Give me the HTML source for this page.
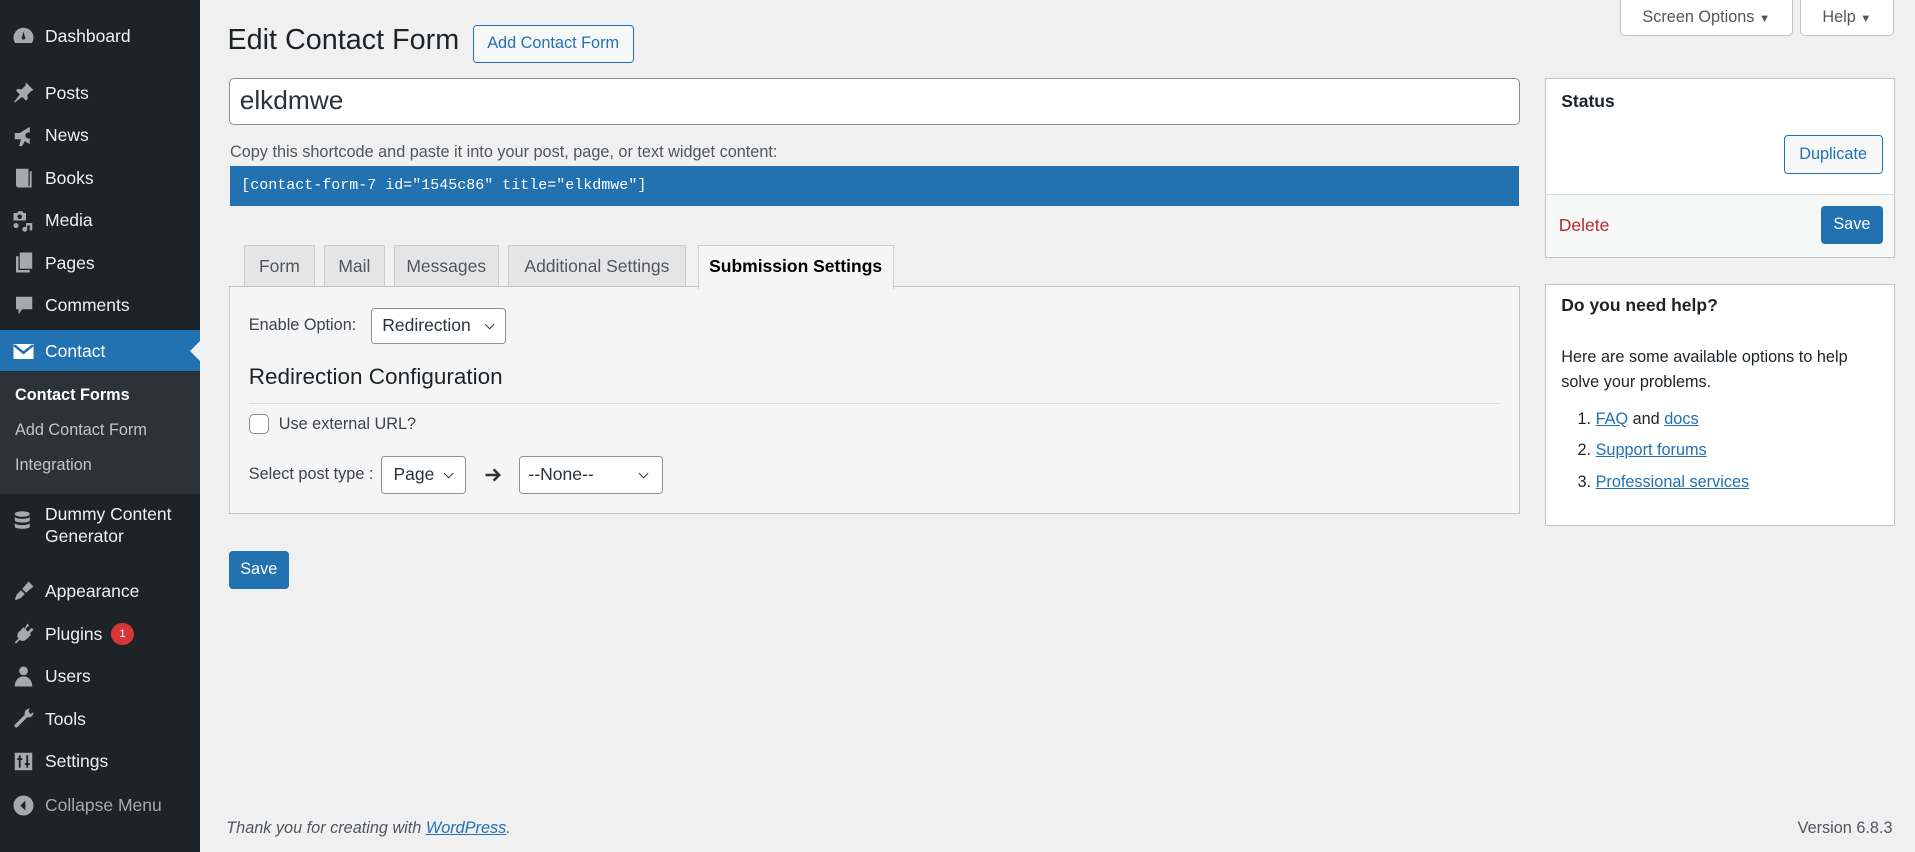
<!DOCTYPE html>
<html><head><meta charset="utf-8"><style>
html,body{margin:0;padding:0;width:1915px;height:852px;overflow:hidden;background:#f0f0f1}
#w{zoom:1.25;width:1532px;height:682px;position:relative;font-family:"Liberation Sans",sans-serif;font-size:13px;color:#3c434a;background:#f0f0f1}
.a{position:absolute}
#side{left:0;top:0;width:160px;height:682px;background:#1d2327}
.mi{position:absolute;left:0;width:160px;height:34px;color:#f0f0f1;font-size:14px}
.mi span{position:absolute;left:36px;top:9px}
.mi svg{position:absolute;left:9px;top:7px}
.sub{position:absolute;left:12px;color:#c3c4c7;font-size:13px}
.btn{position:absolute;border:1px solid #2271b1;border-radius:3px;color:#2271b1;background:#f6f7f7;text-align:center;box-sizing:border-box}
.pbtn{position:absolute;background:#2271b1;color:#fff;border-radius:3px;text-align:center;box-sizing:border-box}
.tab{position:absolute;top:196px;height:34px;background:#e5e5e5;border:1px solid #ccc;border-bottom:none;box-sizing:border-box;font-size:14px;color:#50575e;text-align:center;line-height:33px}
.sel{position:absolute;background:#fff;border:1px solid #8c8f94;border-radius:3px;box-sizing:border-box;font-size:14px;color:#2c3338}
.chev{position:absolute;width:5px;height:5px;border-right:1.3px solid #2c3338;border-bottom:1.3px solid #2c3338;transform:rotate(45deg)}
a{color:#2271b1;text-decoration:underline}
.box{position:absolute;background:#fff;border:1px solid #c3c4c7;box-sizing:border-box}
</style></head><body><div id="w">
<div id="side" class="a">
 <div class="mi" style="top:12px"><svg width="20" height="20" viewBox="0 0 20 20"><path d="M10 3a8 8 0 0 0-8 8c0 1.6.5 3 1.3 4.2h13.4A8 8 0 0 0 18 11a8 8 0 0 0-8-8zm0 9.5a1.5 1.5 0 0 1-1-2.6L10 6l1 3.9a1.5 1.5 0 0 1-1 2.6z" fill="#a7aaad"/></svg><span>Dashboard</span></div>
 <div class="mi" style="top:57px"><svg width="20" height="20" viewBox="0 0 20 20"><path d="M12 2l6 6-2 1-3 3 .5 3-1.5 1.5-3-3L3 18l-.5-.5 4.5-6-3-3L5.5 7l3 .5 3-3z" fill="#a7aaad"/></svg><span>Posts</span></div>
 <div class="mi" style="top:91px"><svg width="20" height="20" viewBox="0 0 20 20"><path d="M3 8h4l8-5v14l-4-2.5-2 4H6.5L8 13H3z" fill="#a7aaad"/><circle cx="14" cy="10" r="2.5" fill="#1d2327"/></svg><span>News</span></div>
 <div class="mi" style="top:125px"><svg width="20" height="20" viewBox="0 0 20 20"><path d="M4 3h10v14H4zM15 5h1.5v13H5v-1h10z" fill="#a7aaad"/></svg><span>Books</span></div>
 <div class="mi" style="top:159px"><svg width="20" height="20" viewBox="0 0 20 20"><path d="M2 4h3l1-1.5h3L10 4h2v6H2z" fill="#a7aaad"/><circle cx="7" cy="7" r="1.8" fill="#1d2327"/><path d="M12 12h5v6h-2v-4h-2v3a2 2 0 1 1-1-1.7zM6 14a2 2 0 1 0 0 .1z" fill="#a7aaad"/></svg><span>Media</span></div>
 <div class="mi" style="top:193px"><svg width="20" height="20" viewBox="0 0 20 20"><path d="M7 2h10v13H7zM4 5h2v11h9v2H4z" fill="#a7aaad"/></svg><span>Pages</span></div>
 <div class="mi" style="top:227px"><svg width="20" height="20" viewBox="0 0 20 20"><path d="M4 3h13v10H9l-3 4v-4H4z" fill="#a7aaad"/></svg><span>Comments</span></div>
 <div class="mi" style="top:264px;height:33px;background:#2271b1;color:#fff"><svg width="20" height="20" viewBox="0 0 20 20"><rect x="2" y="4" width="16" height="12" fill="#fff"/><path d="M2.5 5l7.5 6 7.5-6" stroke="#2271b1" stroke-width="2" fill="none"/></svg><span>Contact</span><div class="a" style="right:0;top:9px;width:0;height:0;border-top:8px solid transparent;border-bottom:8px solid transparent;border-right:8px solid #f0f0f1"></div></div>
 <div class="a" style="left:0;top:297px;width:160px;height:98px;background:#2c3338"></div>
 <div class="sub" style="top:309px;color:#fff;font-weight:bold">Contact Forms</div>
 <div class="sub" style="top:337px">Add Contact Form</div>
 <div class="sub" style="top:365px">Integration</div>
 <div class="mi" style="top:400px;height:48px"><svg width="20" height="20" viewBox="0 0 20 20"><ellipse cx="9" cy="4" rx="6" ry="2.2" fill="#a7aaad"/><path d="M3 6c0 2.5 12 2.5 12 0v3c0 2.5-12 2.5-12 0zM3 11c0 2.5 12 2.5 12 0v3c0 2.5-12 2.5-12 0z" fill="#a7aaad"/></svg><span style="line-height:18px;top:2px">Dummy Content<br>Generator</span></div>
 <div class="mi" style="top:456px"><svg width="20" height="20" viewBox="0 0 20 20"><path d="M14 2l4 4-6 5-3-3zM8 9l3 3-3 3c-1 1-3 1-4 2l-1-1c1-1 1-3 2-4z" fill="#a7aaad"/></svg><span>Appearance</span></div>
 <div class="mi" style="top:490px"><svg width="20" height="20" viewBox="0 0 20 20"><path d="M13 2l1.5 1.5-3 3 2 2 3-3L18 7l-3 3 1 1-4 4c-2 1.5-4 1-5 0L4 18l-1-1 3-3c-1-1-1.5-3 0-5l4-4 1 1z" fill="#a7aaad"/></svg><span>Plugins</span><div class="a" style="left:89px;top:8px;width:18px;height:18px;border-radius:9px;background:#d63638;color:#fff;font-size:9px;text-align:center;line-height:18px">1</div></div>
 <div class="mi" style="top:524px"><svg width="20" height="20" viewBox="0 0 20 20"><circle cx="10" cy="5.5" r="3.5" fill="#a7aaad"/><path d="M3 18c0-5 3-8 7-8s7 3 7 8z" fill="#a7aaad"/></svg><span>Users</span></div>
 <div class="mi" style="top:558px"><svg width="20" height="20" viewBox="0 0 20 20"><path d="M15 2a4 4 0 0 0-4 5L3 15c-1 1 1 3 2 2l8-8a4 4 0 0 0 5-4l-2.5 1.5L14 4z" fill="#a7aaad"/></svg><span>Tools</span></div>
 <div class="mi" style="top:592px"><svg width="20" height="20" viewBox="0 0 20 20"><rect x="3" y="3" width="14" height="14" fill="#a7aaad"/><path d="M7 5v10M13 5v10M5 8h4M11 12h4" stroke="#1d2327" stroke-width="1.5"/></svg><span>Settings</span></div>
 <div class="mi" style="top:627px;color:#a7aaad"><svg width="20" height="20" viewBox="0 0 20 20"><circle cx="10" cy="10" r="8" fill="#a7aaad"/><path d="M11.5 6l-4 4 4 4z" fill="#1d2327"/></svg><span>Collapse Menu</span></div>
</div>

<div class="a" style="left:1296px;top:-1px;width:138px;height:30px;background:#fff;border:1px solid #c3c4c7;border-top:none;border-radius:0 0 4px 4px;box-sizing:border-box;color:#50575e;line-height:29px;text-align:center">Screen Options <span style="font-size:9px">▼</span></div>
<div class="a" style="left:1440px;top:-1px;width:75px;height:30px;background:#fff;border:1px solid #c3c4c7;border-top:none;border-radius:0 0 4px 4px;box-sizing:border-box;color:#50575e;line-height:29px;text-align:center">Help <span style="font-size:9px">▼</span></div>

<div class="a" style="left:182px;top:19px;font-size:23px;color:#1d2327">Edit Contact Form</div>
<div class="btn" style="left:378px;top:20px;width:129px;height:30px;line-height:28px">Add Contact Form</div>

<div class="a" style="left:183px;top:62px;width:1033px;height:38px;background:#fff;border:1px solid #8c8f94;border-radius:4px;box-sizing:border-box;font-size:21px;color:#2c3338;padding-left:8px;line-height:35px">elkdmwe</div>
<div class="a" style="left:184px;top:114px;color:#50575e">Copy this shortcode and paste it into your post, page, or text widget content:</div>
<div class="a" style="left:184px;top:133px;width:1031px;height:32px;background:#2271b1;color:#fff;font-family:'Liberation Mono',monospace;font-size:12px;line-height:32px;padding-left:9px;box-sizing:border-box">[contact-form-7 id="1545c86" title="elkdmwe"]</div>

<div class="tab" style="left:195px;width:57px">Form</div>
<div class="tab" style="left:259px;width:49px">Mail</div>
<div class="tab" style="left:315px;width:84px">Messages</div>
<div class="tab" style="left:406px;width:143px">Additional Settings</div>
<div class="a" style="left:183px;top:229px;width:1033px;height:182px;background:#f5f5f5;border:1px solid #c3c4c7;box-sizing:border-box"></div>
<div class="tab" style="left:558px;width:157px;height:35px;background:#f5f5f5;color:#000;font-weight:bold;z-index:2">Submission Settings</div>

<div class="a" style="left:199px;top:253px">Enable Option:</div>
<div class="sel" style="left:297px;top:246px;width:108px;height:29px;line-height:27px;padding-left:8px">Redirection<div class="chev" style="left:91px;top:10px"></div></div>
<div class="a" style="left:199px;top:291px;font-size:18px;color:#1d2327">Redirection Configuration</div>
<div class="a" style="left:199px;top:322px;width:1001px;height:1px;background:#dcdcde"></div>
<div class="a" style="left:199px;top:331px;width:16px;height:16px;background:#fff;border:1px solid #8c8f94;border-radius:4px;box-sizing:border-box"></div>
<div class="a" style="left:223px;top:332px">Use external URL?</div>
<div class="a" style="left:199px;top:372px">Select post type :</div>
<div class="sel" style="left:305px;top:365px;width:68px;height:30px;line-height:28px;padding-left:9px">Page<div class="chev" style="left:50px;top:10px"></div></div>
<svg class="a" style="left:386px;top:372px" width="16" height="16" viewBox="0 0 16 16"><path d="M2 8h11M8.5 3.5L13 8l-4.5 4.5" stroke="#2c3338" stroke-width="2" fill="none"/></svg>
<div class="sel" style="left:415px;top:365px;width:115px;height:30px;line-height:28px;padding-left:7px">--None--<div class="chev" style="left:96px;top:10px"></div></div>

<div class="pbtn" style="left:183px;top:441px;width:48px;height:30px;line-height:30px">Save</div>

<div class="a" style="left:181px;top:655px;font-style:italic;color:#50575e">Thank you for creating with <a>WordPress</a>.</div>
<div class="a" style="right:18px;top:655px;color:#50575e">Version 6.8.3</div>

<div class="box" style="left:1236px;top:62px;width:280px;height:144px"></div>
<div class="a" style="left:1249px;top:73px;font-size:14px;font-weight:bold;color:#1d2327">Status</div>
<div class="btn" style="left:1427px;top:108px;width:79px;height:31px;line-height:29px">Duplicate</div>
<div class="a" style="left:1237px;top:155px;width:278px;height:50px;background:#f6f7f7;border-top:1px solid #dcdcde"></div>
<div class="a" style="left:1247px;top:172px;font-size:14px;color:#b32d2e">Delete</div>
<div class="pbtn" style="left:1457px;top:165px;width:49px;height:30px;line-height:30px">Save</div>

<div class="box" style="left:1236px;top:227px;width:280px;height:194px"></div>
<div class="a" style="left:1249px;top:236px;font-size:14px;font-weight:bold;color:#1d2327">Do you need help?</div>
<div class="a" style="left:1249px;top:276px;line-height:20px;color:#1d2327">Here are some available options to help<br>solve your problems.</div>
<div class="a" style="left:1262px;top:328px;color:#1d2327">1. <a>FAQ</a> and <a>docs</a></div>
<div class="a" style="left:1262px;top:353px;color:#1d2327">2. <a>Support forums</a></div>
<div class="a" style="left:1262px;top:378px;color:#1d2327">3. <a>Professional services</a></div>
</div></body></html>
